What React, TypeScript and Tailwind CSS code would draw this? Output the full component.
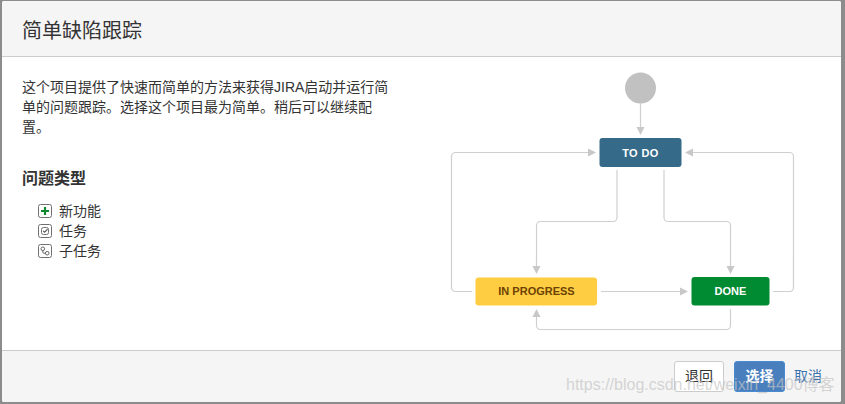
const cjk = "font-['Liberation_Sans','Noto_Sans_CJK_SC',sans-serif]";

function FeatureIcon() {
  return (
    <svg width="14" height="14" viewBox="0 0 14 14" className="shrink-0">
      <rect x="0.5" y="0.5" width="13" height="13" rx="2" fill="#fff" stroke="#707070" />
      <path d="M7 3v8M3 7h8" stroke="#0f8a2f" strokeWidth="2.2" />
    </svg>
  );
}

function TaskIcon() {
  return (
    <svg width="14" height="14" viewBox="0 0 14 14" className="shrink-0">
      <rect x="0.5" y="0.5" width="13" height="13" rx="2" fill="#fff" stroke="#707070" />
      <rect x="3.5" y="3.5" width="7" height="7" rx="2" fill="none" stroke="#707070" />
      <path d="M5.2 6.8l1.4 1.4 3-3" fill="none" stroke="#555" strokeWidth="1.1" />
    </svg>
  );
}

function SubtaskIcon() {
  return (
    <svg width="14" height="14" viewBox="0 0 14 14" className="shrink-0">
      <rect x="0.5" y="0.5" width="13" height="13" rx="2" fill="#fff" stroke="#707070" />
      <circle cx="4.8" cy="4.8" r="1.8" fill="none" stroke="#666" />
      <circle cx="9.2" cy="9.2" r="1.8" fill="none" stroke="#666" />
      <path d="M4.8 6.6v1.6a1 1 0 0 0 1 1h1.6" fill="none" stroke="#666" />
    </svg>
  );
}

function Workflow() {
  const line = { fill: "none", stroke: "#cfcfcf", strokeWidth: 1.2 };
  const head = "#c8c8c8";
  const label = { fontFamily: "'Liberation Sans', sans-serif", fontWeight: 700, fontSize: 11, textAnchor: "middle" as const };
  return (
    <svg width="360" height="280" viewBox="445 65 360 280" className="block">
      <circle cx="640.5" cy="88" r="15.5" fill="#c1c1c1" />
      <path d="M640.5 103V128" {...line} />
      <path d="M636.5 127h8l-4 8z" fill={head} />
      <rect x="599.5" y="138" width="82" height="29" rx="3" fill="#356a88" />
      <text x="640.5" y="156.5" fill="#fff" letterSpacing="0.4" {...label}>TO DO</text>

      <path d="M472 291.5H455.5a4 4 0 0 1-4-4V156.5a4 4 0 0 1 4-4H589" {...line} />
      <path d="M588 148.5v8l8-4z" fill={head} />
      <path d="M773 291.5H789.5a4 4 0 0 0 4-4V156.5a4 4 0 0 0-4-4H692" {...line} />
      <path d="M693 148.5v8l-8-4z" fill={head} />

      <path d="M617 170V217.5a4 4 0 0 1-4 4H540.5a4 4 0 0 0-4 4V267" {...line} />
      <path d="M532.5 266h8l-4 8z" fill={head} />
      <path d="M664 170V217.5a4 4 0 0 0 4 4H726.5a4 4 0 0 1 4 4V267" {...line} />
      <path d="M726.5 266h8l-4 8z" fill={head} />

      <rect x="475.5" y="277.5" width="121.5" height="28" rx="3" fill="#ffcd41" />
      <text x="536.5" y="295" fill="#6d4205" {...label}>IN PROGRESS</text>
      <rect x="691.5" y="277" width="78" height="28.5" rx="3" fill="#008a31" />
      <text x="730.5" y="295" fill="#fff" {...label}>DONE</text>

      <path d="M601 291.5H681" {...line} />
      <path d="M680 287.5v8l8-4z" fill={head} />
      <path d="M730.5 309V325.5a4 4 0 0 1-4 4H540.5a4 4 0 0 1-4-4V316" {...line} />
      <path d="M532.5 317h8l-4-8z" fill={head} />
    </svg>
  );
}

export default function App() {
  return (
    <div className={`relative h-[404px] w-[845px] overflow-hidden bg-[#8c8c8c] pt-px pb-[2px] pl-[2px] pr-[4px] ${cjk}`}>
      <div className="flex h-full flex-col overflow-hidden rounded-[2px] bg-white text-[#333]">
        <header className="flex h-[56px] shrink-0 items-center border-b border-[#ccc] bg-[#f5f5f5] px-5 pt-[4px]">
          <h1 className="text-[20px] font-normal leading-none">简单缺陷跟踪</h1>
        </header>
        <main className="flex min-h-0 flex-1">
          <section className="w-[389px] shrink-0 pl-5 pt-[20px]">
            <p className="w-[368px] text-[14px] leading-[20px]">
              这个项目提供了快速而简单的方法来获得JIRA启动并运行简单的问题跟踪。选择这个项目最为简单。稍后可以继续配置。
            </p>
            <h2 className="mt-[32px] text-[16px] font-bold leading-[20px]">问题类型</h2>
            <ul className="mt-[12px] pl-[16px] text-[14px] leading-[20px]">
              <li className="flex h-5 items-center gap-[7px]"><FeatureIcon />新功能</li>
              <li className="flex h-5 items-center gap-[7px]"><TaskIcon />任务</li>
              <li className="flex h-5 items-center gap-[7px]"><SubtaskIcon />子任务</li>
            </ul>
          </section>
          <section className="pl-[54px] pt-[8px]">
            <Workflow />
          </section>
        </main>
        <footer className="flex h-[52px] shrink-0 items-center justify-end border-t border-[#ccc] bg-[#f5f5f5] pr-[19px] text-[14px]">
          <button className="h-[31px] w-[50px] rounded-[3px] border border-[#ccc] bg-white text-[#333]">退回</button>
          <button className="ml-[10px] h-[31px] w-[51px] rounded-[3px] border border-[#4a8ad0] bg-[#4a7fbd] font-bold text-white">选择</button>
          <a className="ml-[9px] text-[#3b73af]">取消</a>
        </footer>
      </div>
      <div className="pointer-events-none absolute left-[566px] top-[375px] whitespace-nowrap text-[16px] leading-[20px] text-[#c4c4c4]/70">
        https://blog.csdn.net/weixin_4400博客
      </div>
    </div>
  );
}
